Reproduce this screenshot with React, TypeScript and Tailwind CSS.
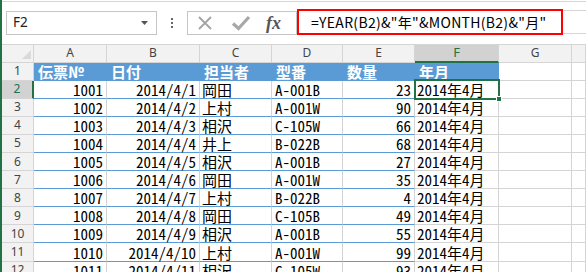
import React from "react";

type Row = { no: string; date: string; who: string; model: string; qty: string };

const rows: Row[] = [
  { no: "1001", date: "2014/4/1", who: "岡田", model: "A-001B", qty: "23" },
  { no: "1002", date: "2014/4/2", who: "上村", model: "A-001W", qty: "90" },
  { no: "1003", date: "2014/4/3", who: "相沢", model: "C-105W", qty: "66" },
  { no: "1004", date: "2014/4/4", who: "井上", model: "B-022B", qty: "68" },
  { no: "1005", date: "2014/4/5", who: "相沢", model: "A-001B", qty: "27" },
  { no: "1006", date: "2014/4/6", who: "岡田", model: "A-001W", qty: "35" },
  { no: "1007", date: "2014/4/7", who: "上村", model: "B-022B", qty: "4" },
  { no: "1008", date: "2014/4/8", who: "岡田", model: "C-105B", qty: "49" },
  { no: "1009", date: "2014/4/9", who: "相沢", model: "A-001B", qty: "55" },
  { no: "1010", date: "2014/4/10", who: "上村", model: "A-001W", qty: "99" },
  { no: "1011", date: "2014/4/11", who: "相沢", model: "C-105W", qty: "93" },
];

const colHead =
  "flex items-center justify-center bg-[#f2f2f2] border-r border-b border-[#d5d5d5] text-[12px] text-[#444] font-['Noto_Sans',sans-serif]";
const rowHead =
  "flex items-center justify-center bg-[#f2f2f2] border-r border-b border-[#d5d5d5] text-[12px] text-[#444] font-['Noto_Sans',sans-serif]";
const cellText =
  "font-['Noto_Sans_CJK_JP',sans-serif] text-[15px] leading-[16px] [font-feature-settings:'hwid'] text-black whitespace-nowrap";
const tblCell =
  "flex items-end border-r border-b border-r-[#d4d4d4] border-b-[#5b9bd5] " + cellText;
const plainCell = "flex items-end border-r border-b border-[#d4d4d4] " + cellText;
const blueHead =
  "flex items-end pl-[4px] bg-[#5b9bd5] border-b border-[#5b9bd5] font-['Noto_Sans_CJK_JP',sans-serif] text-[15px] leading-[16px] font-bold text-white whitespace-nowrap";

export default function App() {
  return (
    <div className="w-[586px] h-[272px] overflow-hidden bg-white border-l-2 border-[#217346]">
      {/* Formula bar */}
      <div className="h-[44px] pt-[1px]">
        <div className="h-[43px] border-t border-[#d5d5d5] flex items-start">
          <div className="ml-[4px] mt-[9px] w-[151px] h-[24px] border border-[#c6c6c6] bg-white flex items-center justify-between pl-[6px] pr-[8px]">
            <span className="font-['Noto_Sans',sans-serif] text-[13.5px] text-[#222] leading-none">F2</span>
            <svg width="7" height="4" viewBox="0 0 7 4">
              <path d="M0 0 L7 0 L3.5 4 Z" fill="#555" />
            </svg>
          </div>
          <div className="w-[30px] h-[43px] flex flex-col items-center pt-[16px] gap-[2px]">
            <div className="w-[2px] h-[2px] bg-[#666]" />
            <div className="w-[2px] h-[2px] bg-[#666]" />
            <div className="w-[2px] h-[2px] bg-[#666]" />
          </div>
          <div className="mt-[9px] w-[110px] h-[24px] border border-[#c6c6c6] bg-white flex items-center">
            <svg width="16" height="16" viewBox="0 0 16 16" className="ml-[9px]">
              <path d="M2 2 L14 14 M14 2 L2 14" stroke="#a3a3a3" strokeWidth="1.8" fill="none" />
            </svg>
            <svg width="20" height="16" viewBox="0 0 20 16" className="ml-[18px]">
              <path d="M2 8.5 L7.5 13.5 L18 2" stroke="#a8a8a8" strokeWidth="3.2" fill="none" />
            </svg>
            <span className="ml-[15px] font-['Liberation_Serif',serif] italic font-bold text-[18px] text-[#555] leading-none">
              fx
            </span>
          </div>
          <div className="mt-[7px] w-[266px] h-[26px] border-2 border-[#ff0000] bg-white flex items-center pl-[12px]">
            <span className="font-['Noto_Sans_CJK_JP',sans-serif] text-[14px] tracking-[0.3px] text-black leading-none whitespace-nowrap">
              =YEAR(B2)&amp;"年"&amp;MONTH(B2)&amp;"月"
            </span>
          </div>
          <div className="mt-[8px] flex-1 h-[24px] border-t border-b border-[#d5d5d5] bg-white" />
        </div>
      </div>

      {/* Sheet */}
      <div className="grid grid-cols-[32px_73px_93px_72px_71px_72px_84px_73px_1fr] grid-rows-[18.5px_repeat(12,18.1px)]">
        {/* column headers */}
        <div className="relative bg-[#f2f2f2] border-r border-b border-t border-[#d5d5d5]">
          <svg width="9" height="9" viewBox="0 0 9 9" className="absolute right-[2px] bottom-[3px]">
            <path d="M9 0 L9 9 L0 9 Z" fill="#dadada" />
          </svg>
        </div>
        <div className={colHead + " border-t"}>A</div>
        <div className={colHead + " border-t"}>B</div>
        <div className={colHead + " border-t"}>C</div>
        <div className={colHead + " border-t"}>D</div>
        <div className={colHead + " border-t"}>E</div>
        <div className="flex items-center justify-center bg-[#d2d2d2] border-t border-t-[#d5d5d5] border-r border-r-[#d5d5d5] border-b-2 border-b-[#217346] text-[13px] text-[#217346] font-['Noto_Sans',sans-serif]">
          F
        </div>
        <div className={colHead + " border-t"}>G</div>
        <div className={colHead + " border-t"}></div>

        {/* row 1 */}
        <div className={rowHead}>1</div>
        <div className={blueHead}>伝票№</div>
        <div className={blueHead}>日付</div>
        <div className={blueHead}>担当者</div>
        <div className={blueHead}>型番</div>
        <div className={blueHead}>数量</div>
        <div className={blueHead}>年月</div>
        <div className={plainCell}></div>
        <div className={plainCell}></div>

        {rows.map((r, i) => (
          <React.Fragment key={r.no}>
            {i === 0 ? (
              <div className="flex items-center justify-center bg-[#d2d2d2] border-b border-b-[#d5d5d5] border-r-2 border-r-[#217346] text-[12px] text-[#217346] font-['Noto_Sans',sans-serif]">
                2
              </div>
            ) : (
              <div className={rowHead}>{i + 2}</div>
            )}
            <div className={tblCell + " justify-end pr-[3px]"}>{r.no}</div>
            <div className={tblCell + " justify-end pr-[3px]"}>{r.date}</div>
            <div className={tblCell + " pl-[2px]"}>{r.who}</div>
            <div className={tblCell + " pl-[3px]"}>{r.model}</div>
            <div className={tblCell + " justify-end pr-[3px]"}>{r.qty}</div>
            {i === 0 ? (
              <div className={plainCell + " pl-[2px] relative"}>
                2014年4月
                <div className="absolute left-[-1px] right-[-2px] top-[-2px] bottom-[-2px] border-2 border-[#217346]">
                  <div className="absolute right-[-4px] bottom-[-4px] w-[6px] h-[6px] bg-[#217346] border border-white" />
                </div>
              </div>
            ) : (
              <div className={plainCell + " pl-[2px]"}>2014年4月</div>
            )}
            <div className={plainCell}></div>
            <div className={plainCell}></div>
          </React.Fragment>
        ))}
      </div>
    </div>
  );
}
